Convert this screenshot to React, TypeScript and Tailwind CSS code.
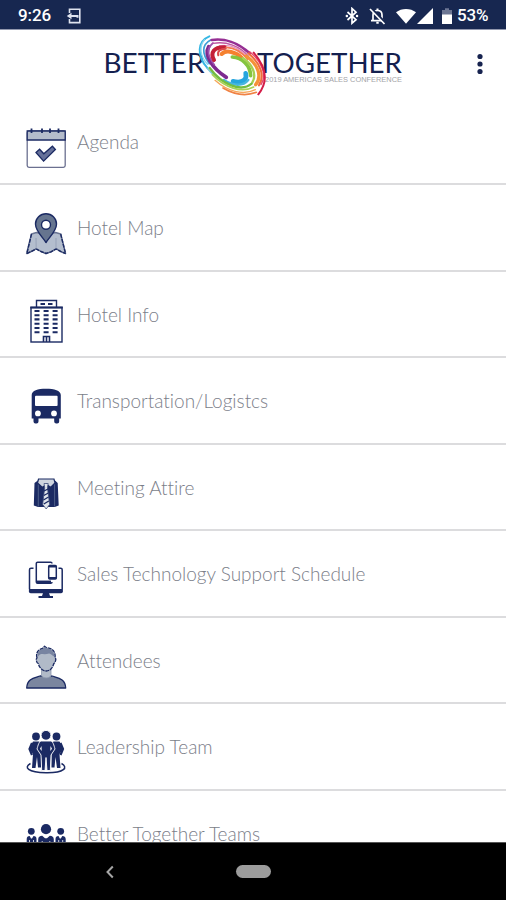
import type { ReactNode } from 'react'

const NAVY = '#1b2a63'

interface MenuItem {
  label: string
  icon: ReactNode
}

function CalendarIcon() {
  return (
    <g stroke="#3d4775" strokeWidth="1.3" fill="none">
      <rect x="11.2" y="12" width="38" height="36.3" rx="1.8" fill="#fff" stroke="#6b7090" />
      <path d="M11.2 21V12h38v9z" fill="#b4bccb" stroke={NAVY} />
      <path d="M15.5 9.5v4.5M26 9.5v4.5M34 9.5v4.5M42.5 9.5v4.5" stroke={NAVY} strokeWidth="1.8" />
      <path d="M20 33.5l3.6-3.3 4.2 4.6 8.6-7.6 3 3.3-11.8 11.6z" fill="#66719a" stroke={NAVY} />
    </g>
  )
}

function MapIcon() {
  return (
    <g stroke={NAVY} strokeWidth="1.4" strokeLinejoin="round">
      <path
        d="M15.5 29l5-1.5 9.5 2 9.5-2 5.2 1.5 4.9 19.5-4.6-1.8-4.8-2.8-5.2 3-5 1.6-5-2-4.8-2.6-5.2 2.6-4.4 2z"
        fill="#b4bece"
        stroke="#6a7593"
      />
      <path
        d="M10.8 48.7l4.2-2 5.2-2.8 4.8 2.6 5 2 5-1.6 5.2-3 4.8 2.8 4.6 2M15.5 29l-4.6 19.5M44.7 29l4.8 19.5"
        fill="none"
        strokeDasharray="4 1"
      />
      <path d="M20 33l.2 10.5M40 33v10.5" stroke="#97a2b8" strokeWidth="1" />
      <path d="M30 37.5C26.5 32 19.5 26 19.5 19a10.5 10.3 0 0 1 21 0C40.5 26 33.5 32 30 37.5z" fill="#66758f" />
      <circle cx="30" cy="19.8" r="4.5" fill="#fff" />
    </g>
  )
}

function HotelIcon() {
  const rows = [19, 23.2, 27.4, 31.7, 36, 40.3]
  return (
    <g fill="none" stroke={NAVY} strokeWidth="1.4">
      <rect x="15" y="15.5" width="31" height="34.500" />
      <path d="M20.5 15.5V8.500h20v7" />
      <path d="M24.5 12h4.5M32 12h4.5" strokeWidth="1.8" />
      <path d="M14.3 15.5h32.5" strokeWidth="2" />
      {rows.map((y) => (
        <path key={y} d={`M18.500 ${y}h5M27.600 ${y}h5M36.600 ${y}h5`} strokeWidth="2.1" />
      ))}
      <path d="M27.500 50v-5.500h6V50M30.500 44.500V50" strokeWidth="1.6" />
    </g>
  )
}

function BusIcon() {
  return (
    <g fill={NAVY}>
      <path d="M15.700 17c0-4.500 6-6.300 14.300-6.300S44.800 12.500 44.800 17v23.500h-1.600v3a2 2 0 0 1-2 2h-1a2 2 0 0 1-2-2v-3H22.500v3a2 2 0 0 1-2 2h-1a2 2 0 0 1-2-2v-3h-1.800z" />
      <rect x="19" y="17.800" width="22.600" height="10.200" rx="1" fill="#fff" />
      <circle cx="21.900" cy="35.400" r="2.900" fill="#fff" />
      <circle cx="38" cy="35.400" r="2.900" fill="#fff" />
    </g>
  )
}

function ShirtIcon() {
  return (
    <g>
      <path d="M22.500 15l7.500 3 8.500-3 3.200 3 1 22.500-4 1.500H22L17.800 40.500 18.500 18z" fill={NAVY} />
      <path d="M22.300 18v23.500M38.600 18v23.500" stroke="#5a6b90" strokeWidth=".8" />
      <path d="M22.500 14h15.500l1 4-4.500 4.500-4-3.500-4 3.500-5-4.500z" fill="#cfd5df" stroke={NAVY} strokeWidth="1.2" />
      <path d="M28 18.500h4.200l-.8 4 2.200 17-3.400 4.500-3.500-4.500 2-17z" fill="#e1e5eb" stroke="#43527f" strokeWidth=".8" />
      <path d="M28 26l4-2M27.800 30.500l4.500-2.500M27.500 35l5-3M27.800 39l5-3" stroke={NAVY} strokeWidth="1.3" />
    </g>
  )
}

function DevicesIcon() {
  return (
    <g fill="none" stroke={NAVY} strokeWidth="1.5">
      <path d="M17.500 17.300H15a1.500 1.500 0 0 0-1.500 1.500V38M42.500 17.300h2.200a1.500 1.500 0 0 1 1.500 1.500V38" />
      <path d="M12.900 38h34v2.500a1.800 1.800 0 0 1-1.800 1.800H14.700a1.800 1.800 0 0 1-1.800-1.800z" fill={NAVY} stroke="none" />
      <path d="M27 42h6l1 3h3v2H22.500v-2h3.500z" fill={NAVY} stroke="none" />
      <path d="M36 12.500a1.300 1.300 0 0 0-1.300-1.300H21.600a1.300 1.300 0 0 0-1.300 1.300V31a1.300 1.300 0 0 0 1.300 1.300h13.100A1.300 1.300 0 0 0 36 31" />
      <path d="M20.300 30.800H35" strokeWidth="2.5" />
      <rect x="32.700" y="14.500" width="7.600" height="13.400" rx="1" fill="#fff" />
      <path d="M32.700 15.500h7.600M32.700 27h7.600" strokeWidth="2" />
    </g>
  )
}

function PersonIcon() {
  return (
    <g stroke={NAVY} strokeWidth="1.3" strokeLinejoin="round">
      <path d="M24 38c-6 2-13 2.500-13.300 12h39C49.400 40.500 42 40 36 38z" fill="#7b869f" />
      <path d="M25.500 29V38c2.500 2.500 7 2.500 9.500 0v-9z" fill="#b1bac8" stroke="#8d98ae" strokeWidth=".8" />
      <path
        d="M21 20c-1.500-5 1-8.500 5.500-9.500l2-2.300 2 1.500c6 .5 9.500 4 8.500 10.300 1.800 1 0 5-1.200 5.500-1 4.500-4 7.500-7.500 7.500s-7-3-8-7.500c-1.500-.5-3-4.500-1.300-5.500z"
        fill="#b1bac8"
        strokeDasharray="4 .8"
      />
      <path d="M22 18.500c-1-4 1-6.800 4.800-7.700l1.900-2 1.800 1.500c5.500.5 8 4 7.600 8.200-2-1-3-2.500-5-3-3 1-6 .5-8 .5-1.500.5-2.200 1.500-3.100 2.500z" fill="#7884a1" stroke="none" />
    </g>
  )
}

function LeadershipIcon() {
  return (
    <g fill={NAVY}>
      <path d="M14.500 39.500c-7 3.800-3 9 15.500 9.300s22.500-5.500 15.500-9.300" fill="none" stroke={NAVY} strokeWidth="1.500" />
      <circle cx="20" cy="12.500" r="3.900" />
      <circle cx="40.500" cy="12.500" r="3.900" />
      <path d="M17 17.500h6l2 2.500-1.500 5.500 1.500 5.500v12.500h-3L21 33l-1.500 11H16l1-14-4-5.500z" />
      <path d="M43.500 17.500h-6l-2 2.500 1.500 5.500-1.500 5.500v12.500h3L39.500 33 41 44h3.500l-1-14 4-5.500z" />
      <path d="M16 19l-2.500 6 2.500 6M44.500 19l2.500 6-2.500 6" fill="none" stroke={NAVY} strokeWidth="2.2" />
      <g stroke="#fff" strokeWidth=".9">
        <circle cx="30" cy="11.300" r="4.900" />
        <path d="M25.500 17h9c2.500 0 3.500 4.500 4.500 8l-4 6-.7 15.500h-3.300L30 33.500 29 46.500h-3.300L25 31l-4-6c1-3.500 2-8 4.500-8z" />
      </g>
      <path d="M25.500 22l-1.500 2.700 1.700 2.300zM34.500 22l1.500 2.700-1.700 2.300z" fill="#fff" />
    </g>
  )
}

function TeamsIcon() {
  return (
    <g fill={NAVY}>
      <circle cx="15.300" cy="20.300" r="3.400" />
      <circle cx="30" cy="18.200" r="5.100" />
      <circle cx="44.700" cy="20.300" r="3.400" />
      <path d="M10.700 38V28c0-2 1-3 3-3l1.300 2.500h1L17.500 25c2 0 3 1 3 3v10zM39.500 38V28c0-2 1-3 3-3l1.300 2.500h1l1.500-2.500c2 0 3.400 1 3.400 3v10z" />
      <path d="M22.200 38V28.500c0-2.500 1.500-3.700 4-3.700l2.800 2.400h2l2.800-2.400c2.500 0 4 1.200 4 3.700V38z" />
      <path d="M13.500 29v9M17.500 29v9M26.200 30v8M33.800 30v8M42.700 29v9M46.700 29v9" stroke="#fff" strokeWidth=".8" />
    </g>
  )
}

const ITEMS: MenuItem[] = [
  { label: 'Agenda', icon: <CalendarIcon /> },
  { label: 'Hotel Map', icon: <MapIcon /> },
  { label: 'Hotel Info', icon: <HotelIcon /> },
  { label: 'Transportation/Logistcs', icon: <BusIcon /> },
  { label: 'Meeting Attire', icon: <ShirtIcon /> },
  { label: 'Sales Technology Support Schedule', icon: <DevicesIcon /> },
  { label: 'Attendees', icon: <PersonIcon /> },
  { label: 'Leadership Team', icon: <LeadershipIcon /> },
  { label: 'Better Together Teams', icon: <TeamsIcon /> },
]

function StatusBar() {
  return (
    <div className="flex h-[30px] shrink-0 items-center border-b border-[#9298ae] bg-[#172750] pt-[2px] pl-[18px] font-['Roboto',sans-serif] text-[17px] font-medium text-white">
      <span className="w-[34px] leading-none tracking-[-0.1px]">9:26</span>
      <svg className="ml-[14px] h-4 w-4" viewBox="0 0 16 16" fill="none" stroke="#dfe3ee" strokeWidth="1.600">
        <path d="M3.500 5V1.200h10.300v13.400H3.500V11" />
        <path d="M11.500 9.800V8H4" strokeWidth="2" />
        <path d="M5.500 4.800v6.400L.8 8z" fill="#dfe3ee" stroke="none" />
      </svg>
      <svg className="ml-auto h-[18px] w-[110px]" viewBox="0 0 110 18">
        <g fill="none" stroke="#fff" strokeWidth="1.700">
          <path d="M4.500 5l8.500 7.700-4 3.500V1.500l4 3.700L4.500 13" />
          <path d="M3.800 9h.1M14 9h.1" strokeWidth="2.400" strokeLinecap="round" />
          <path d="M30 13.500V8c0-3 1.600-4.500 4.500-4.500S39 5 39 8v5.500zM28 13.700h13" />
          <path d="M34.500 1.500v2M33.300 15.700h2.400" strokeWidth="2" />
          <path d="M28.500 1.500l14 14.500" stroke="#172750" strokeWidth="2.500" />
          <path d="M27 2l14.500 15" />
        </g>
        <path d="M53 5.300C58.500.8 67.500.8 73 5.300L63 16.800z" fill="#fff" />
        <path d="M90 1v16H74z" fill="#fff" />
        <path d="M99 3h3V1.300h4V3h3v6H99z" fill="#6c7694" />
        <path d="M99 7.500h10V17H99z" fill="#fff" />
      </svg>
      <span className="mr-[16px] ml-[4px] w-[33px] leading-none tracking-[-0.1px] whitespace-nowrap">53%</span>
    </div>
  )
}

function Swirl() {
  return (
    <svg className="h-[68px] w-[76px]" viewBox="0 0 228 204" fill="none" strokeLinecap="round">
      {/* outer left */}
      <path d="M43 13C8 27 3 70 38 109" stroke="#35b6e3" strokeWidth="6" />
      <path d="M29 23C12 42 14 72 38 97" stroke="#8ad6ee" strokeWidth="4" />
      <path d="M47 24C20 38 20 65 43 95" stroke="#3c9fd6" strokeWidth="5" />
      <path d="M36 108C48 124 62 134 78 144" stroke="#7ccbdc" strokeWidth="4" />
      <path d="M41 44C26 70 52 109 94 136" stroke="#7d2a90" strokeWidth="11" />
      <path d="M54 33C36 48 36 71 58 98" stroke="#a04fae" strokeWidth="5" />
      {/* top */}
      <path d="M50 24C88 18 130 32 164 64" stroke="#962f93" strokeWidth="8" />
      <path d="M55 34C94 27 134 42 161 73" stroke="#c158a2" strokeWidth="4" />
      <path d="M74 41C108 36 139 51 164 80" stroke="#e68fc0" strokeWidth="4" />
      <path d="M57 84C45 62 56 45 89 46" stroke="#c41f38" strokeWidth="12" />
      <path d="M70 70C66 58 76 50 92 50" stroke="#da4a4a" strokeWidth="6" />
      <path d="M80 66C94 52 122 60 140 77" stroke="#f5812f" strokeWidth="12" />
      <path d="M94 46C118 47 141 60 158 82" stroke="#f37a50" strokeWidth="5" />
      {/* right */}
      <path d="M112 75C141 77 166 99 167 131" stroke="#85c43f" strokeWidth="11" />
      <path d="M144 78C173 98 186 128 172 151" stroke="#a6d052" strokeWidth="7" />
      <path d="M154 72C188 97 203 132 182 158" stroke="#f59338" strokeWidth="10" />
      <path d="M160 64C196 94 211 130 192 160" stroke="#f06c3c" strokeWidth="6" />
      <path d="M164 59C202 90 216 130 198 158" stroke="#e6476a" strokeWidth="4" />
      <path d="M176 62C216 108 219 150 190 187" stroke="#d41d48" strokeWidth="6" />
      {/* bottom */}
      <path d="M152 124C157 142 144 155 114 148" stroke="#26a5de" strokeWidth="14" />
      <path d="M87 144C114 162 144 164 160 144" stroke="#47b6df" strokeWidth="7" />
      <path d="M44 108C80 157 138 182 170 155" stroke="#74bd42" strokeWidth="7" />
      <path d="M52 128C90 167 139 184 176 165" stroke="#a9d156" strokeWidth="5" />
      <path d="M60 145C96 177 144 192 181 173" stroke="#f6a75a" strokeWidth="4" />
      <path d="M84 168C118 188 153 193 184 181" stroke="#f08244" strokeWidth="5" />
    </svg>
  )
}

function Logo() {
  return (
    <div className="relative ml-[104px] flex h-[68px] w-[302px] text-[#14204f]">
      <svg className="h-[68px] w-[302px]" viewBox="104 30 302 68">
        <g className="font-['Lato',sans-serif]" fill="#14204f">
          <text x="103.500" y="72.700" fontSize="27" textLength="101" lengthAdjust="spacingAndGlyphs">BETTER</text>
          <text x="257" y="72.700" fontSize="27" textLength="145" lengthAdjust="spacingAndGlyphs">TOGETHER</text>
        </g>
        <text className="font-['Liberation_Sans',sans-serif]" x="265" y="82" fontSize="6.300" textLength="137" lengthAdjust="spacingAndGlyphs" fill="#a3a4a8">
          2019 AMERICAS SALES CONFERENCE
        </text>
      </svg>
      <div className="absolute top-[2px] left-[91px]">
        <Swirl />
      </div>
    </div>
  )
}

export default function App() {
  return (
    <div className="flex h-[900px] w-[506px] flex-col overflow-hidden bg-white">
      <StatusBar />

      <header className="flex h-[68.5px] shrink-0 items-start">
        <Logo />
        <svg className="mt-[22px] ml-[70px] h-6 w-2" viewBox="0 0 8 24" fill="#17234f">
          <circle cx="4" cy="4.500" r="2.600" />
          <circle cx="4" cy="12" r="2.600" />
          <circle cx="4" cy="19.500" r="2.600" />
        </svg>
      </header>

      {/* Menu */}
      <main className="min-h-0 flex-1 overflow-hidden">
        {ITEMS.map((item) => (
          <div key={item.label} className="flex h-[86.5px] items-start border-b-2 border-[#dcdcde] pl-4">
            <svg className="mt-5 h-[60px] w-[60px] shrink-0" viewBox="0 0 60 60">
              {item.icon}
            </svg>
            <span className="mt-[31px] ml-px font-['Lato',sans-serif] text-[19px] leading-6 font-light whitespace-nowrap text-[#7b7e89] [font-variant-ligatures:none]">
              {item.label}
            </span>
          </div>
        ))}
      </main>

      {/* Navigation bar */}
      <nav className="flex h-[58px] shrink-0 items-center border-t border-[#555] bg-black">
        <svg className="ml-[105px] h-4 w-[10px]" viewBox="0 0 10 16" fill="none" stroke="#a6a6a6" strokeWidth="2">
          <path d="M7.800 2.500L2.500 8l5.300 5.500" />
        </svg>
        <div className="mb-px ml-[121px] h-[13px] w-[35px] rounded-full bg-[#9c9c9c]" />
      </nav>
    </div>
  )
}
